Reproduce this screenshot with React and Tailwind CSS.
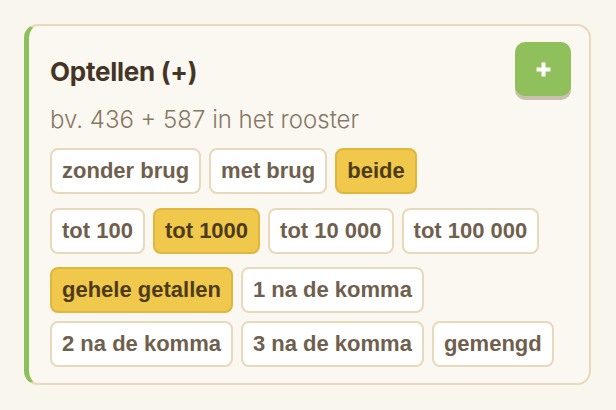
import React, { useState } from 'react';

const groups = [
  { key: 'brug', gap: '', options: ['zonder brug', 'met brug', 'beide'] },
  { key: 'bereik', gap: 'mt-[14px]', options: ['tot 100', 'tot 1000', 'tot 10 000', 'tot 100 000'] },
  {
    key: 'komma',
    gap: 'mt-[13px]',
    options: ['gehele getallen', '1 na de komma', '2 na de komma', '3 na de komma', 'gemengd'],
  },
];

const Chip = ({ label, active, onClick }) => (
  <button
    type="button"
    onClick={onClick}
    className={
      active
        ? 'h-[46px] px-[10px] rounded-[8px] border-2 border-[#dfb63f] bg-[#f0c84b] text-[#4d3b1c] text-[22px] leading-[26px] font-bold'
        : 'h-[46px] px-[10px] rounded-[8px] border-2 border-[#e8d8bc] bg-white text-[#6f604e] text-[22px] leading-[26px] font-bold'
    }
    style={{ fontFamily: '"Liberation Sans", Arial, sans-serif' }}
  >
    {label}
  </button>
);

const App = () => {
  const [picked, setPicked] = useState({
    brug: 'beide',
    bereik: 'tot 1000',
    komma: 'gehele getallen',
  });

  return (
    <div className="min-h-screen bg-[#f9f6ee] pt-6 pl-6" style={{ fontFamily: 'Inter, sans-serif' }}>
      <div className="w-[567px] rounded-[14px] border-2 border-l-[5px] border-[#e8d9bd] border-l-[#8dc05b] bg-[#fbf8f1] pt-4 pb-4 pl-[21px] pr-[18px]">
        <div className="flex items-start justify-between">
          <h3 className="mt-[14px] text-[26px] leading-[32px] font-bold tracking-[-0.01em] text-[#443527]">
            Optellen (+)
          </h3>
          <button
            type="button"
            className="flex h-[54px] w-[56px] items-center justify-center rounded-[10px] bg-[#8fc05b] shadow-[0_4px_0_#cbc0ae]"
          >
            <svg width="17" height="17" viewBox="0 0 17 17">
              <path d="M8.5 1.5v14M1.5 8.5h14" stroke="#fff" strokeWidth="4" />
            </svg>
          </button>
        </div>

        <p className="mt-[10px] text-[24px] leading-[28px] font-light text-[#877765]">
          bv. 436 + 587 in het rooster
        </p>

        <div className="mt-[14px]">
          {groups.map((g) => (
            <div key={g.key} className={`flex flex-wrap gap-2 ${g.gap}`}>
              {g.options.map((o) => (
                <Chip
                  key={o}
                  label={o}
                  active={picked[g.key] === o}
                  onClick={() => setPicked({ ...picked, [g.key]: o })}
                />
              ))}
            </div>
          ))}
        </div>
      </div>
    </div>
  );
};

export default App;
